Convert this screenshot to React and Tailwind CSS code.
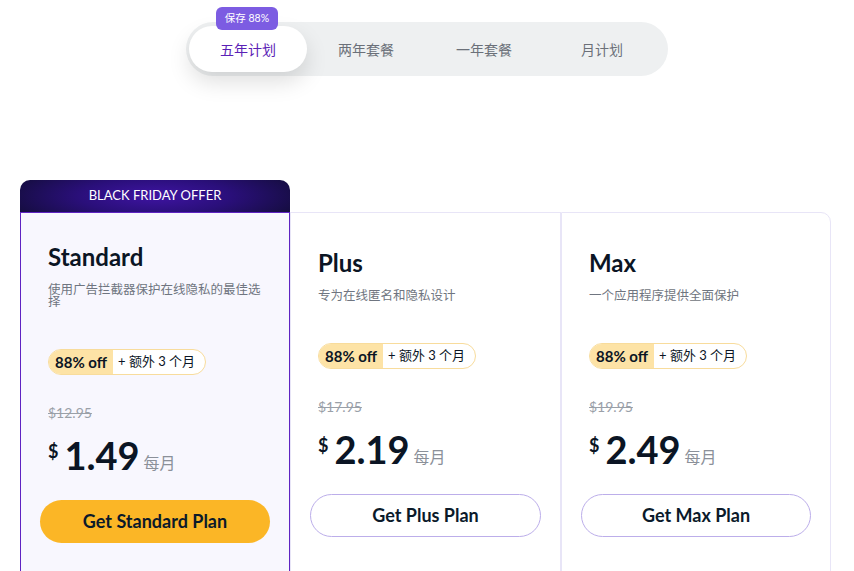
import React from "react";

const FONT = { fontFamily: '"Lato", "Noto Sans CJK SC", sans-serif' };

function Badge() {
  return (
    <div className="flex h-[26px] w-fit items-stretch overflow-hidden rounded-full border border-[#f8dc9c] bg-white">
      <div className="flex items-center bg-[#fde3a6] pl-[6px] pr-[6px] text-[15px] font-bold text-[#0b1524]">88% off</div>
      <div className="flex items-center pl-[5px] pr-[10px] text-[13px] text-[#0b1524]">+ 额外 3 个月</div>
    </div>
  );
}

function Price({ old, price }) {
  return (
    <>
      <div className="mt-[28px] h-[20px] text-[14px] leading-[20px] text-[#9aa0a8] line-through">{old}</div>
      <div className="mt-[10px] flex h-[44px] items-end">
        <span className="mb-[17px] mr-[6px] text-[18px] font-bold leading-none text-[#0b1524]">$</span>
        <span className="text-[38px] font-bold leading-[44px] text-[#0b1524]">{price}</span>
        <span className="mb-[4px] ml-[4px] text-[16px] leading-[20px] text-[#8b9099]">每月</span>
      </div>
    </>
  );
}

function Card({ name, desc, old, price, cta, highlight, last, pt }) {
  return (
    <div
      className={
        "flex h-full flex-col border " +
        (highlight
          ? "border-[#5f23c2] bg-[#f8f7fe]"
          : "border-[#e8e5f7] bg-white ") +
        (last ? " rounded-tr-[10px]" : "")
      }
    >
      <div className="px-[27px]" style={{ paddingTop: pt }}>
        <div className="h-[32px] text-[24px] font-bold leading-[32px] text-[#0b1524]">{name}</div>
        <div className="mt-[11px] text-[12.5px] leading-[12px] text-[#6f7580]">{desc}</div>
        <div className="mt-[41px]"><Badge /></div>
        <Price old={old} price={price} />
      </div>
      <div className="px-[19px] pt-[23px]">
        <button
          className={
            "flex h-[43px] w-full items-center justify-center rounded-full text-[18px] font-bold text-[#0b1a2a] " +
            (highlight ? "bg-[#fbb626]" : "border border-[#bcaeea] bg-white")
          }
        >
          {cta}
        </button>
      </div>
    </div>
  );
}

export default function App() {
  const tabs = ["五年计划", "两年套餐", "一年套餐", "月计划"];
  return (
    <div className="h-[571px] w-[854px] overflow-hidden bg-white" style={FONT}>
      <div className="flex justify-center pt-[22px]">
        <div className="flex h-[54px] w-[482px] items-center rounded-full bg-[#eef0f1] pl-[3px]">
          {tabs.map((t, i) => (
            <div
              key={t}
              className={
                "relative flex h-[46px] w-[118px] items-center justify-center rounded-full text-[14px] " +
                (i === 0
                  ? "bg-white text-[#5b21b6] shadow-[0_10px_22px_rgba(0,0,0,0.13)]"
                  : "text-[#6b7079]")
              }
            >
              {t}
              {i === 0 && (
                <div className="absolute left-[27px] top-[-19px] flex h-[23px] w-[62px] items-center justify-center rounded-[6px] bg-[#7c5ce2] text-[10.5px] text-white">
                  保存 88%
                </div>
              )}
            </div>
          ))}
        </div>
      </div>

      <div className="mt-[104px] flex pl-[20px]">
        <div className="flex w-[270px] flex-col">
          <div className="flex h-[32px] items-center justify-center rounded-t-[10px] bg-[radial-gradient(ellipse_70%_140%_at_center,#3f14a3_0%,#2a0f7a_40%,#0a0c22_100%)] text-[13px] text-white">
            BLACK FRIDAY OFFER
          </div>
          <div className="h-[380px]">
            <Card
              highlight
              pt={28}
              name="Standard"
              desc="使用广告拦截器保护在线隐私的最佳选择"
              old="$12.95"
              price="1.49"
              cta="Get Standard Plan"
            />
          </div>
        </div>
        <div className="mt-[32px] h-[380px] w-[271px]">
          <Card
            pt={34}
            name="Plus"
            desc="专为在线匿名和隐私设计"
            old="$17.95"
            price="2.19"
            cta="Get Plus Plan"
          />
        </div>
        <div className="mt-[32px] h-[380px] w-[270px]">
          <Card
            last
            pt={34}
            name="Max"
            desc="一个应用程序提供全面保护"
            old="$19.95"
            price="2.49"
            cta="Get Max Plan"
          />
        </div>
      </div>
    </div>
  );
}
